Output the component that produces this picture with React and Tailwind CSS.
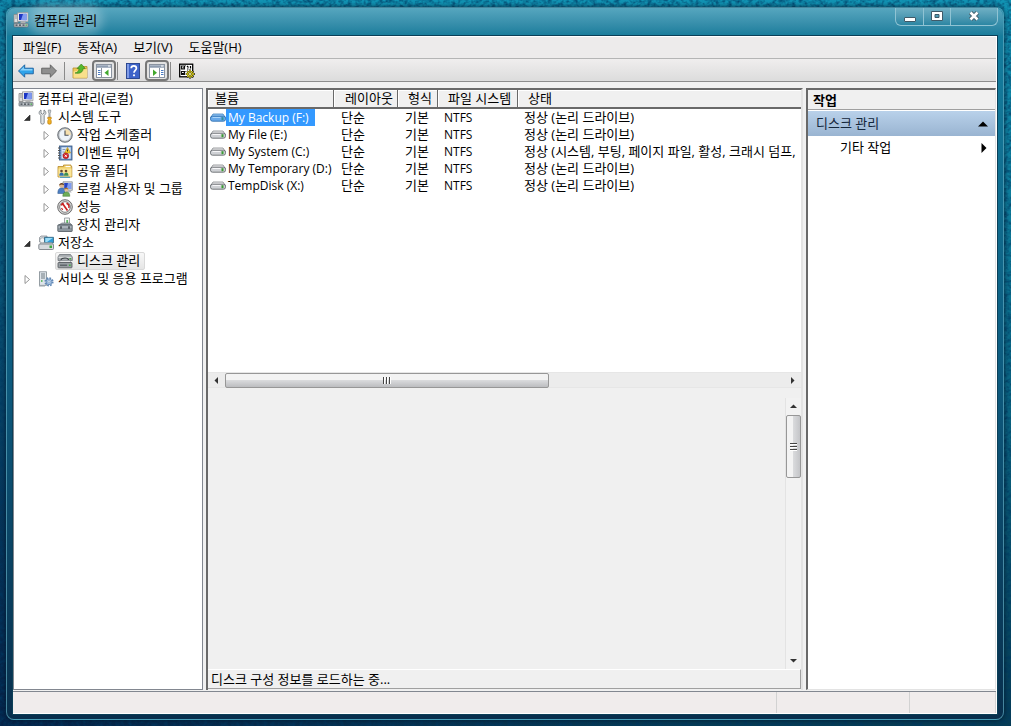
import React, { useState } from 'react';

const volumes = [
    { name: 'My Backup (F:)', status: '정상 (논리 드라이브)' },
    { name: 'My File (E:)', status: '정상 (논리 드라이브)' },
    { name: 'My System (C:)', status: '정상 (시스템, 부팅, 페이지 파일, 활성, 크래시 덤프,' },
    { name: 'My Temporary (D:)', status: '정상 (논리 드라이브)' },
    { name: 'TempDisk (X:)', status: '정상 (논리 드라이브)' },
];

const menus = ['파일(F)', '동작(A)', '보기(V)', '도움말(H)'];

// ---------- icons ----------

const Svg = ({ children, className = 'h-4 w-4' }) => (
    <svg viewBox="0 0 16 16" className={`${className} shrink-0`} aria-hidden="true">
        {children}
    </svg>
);

const ComputerIcon = () => (
    <Svg>
        <path d="M1 2.500h4v8H1z" fill="#dcdcdc" stroke="#8a8a8a" strokeWidth=".8" />
        <path d="M2 4h2M2 6h2" stroke="#888" strokeWidth=".8" />
        <path d="M4.500 .8l10.500-.3v9.200l-10.500-.4z" fill="#e8e8e8" stroke="#8f8f94" strokeWidth=".7" />
        <path d="M6 2l7.500-.2v6.400L6 8z" fill="#1b35c4" />
        <path d="M10 1.900l3.500-.1v6.400L8 8z" fill="#7d97f0" />
        <path d="M8 9.500h4l1 2H7z" fill="#bcbcbc" />
        <rect x="1" y="11.300" width="14" height="3.700" rx=".6" fill="#b9bec4" stroke="#5d646b" strokeWidth=".7" />
        <path d="M2.500 13.200h2M6 13.200h2M9.500 13.200h2" stroke="#3d444b" strokeWidth="1.200" />
        <path d="M12.500 13.200h1.500" stroke="#3fae3f" strokeWidth="1.200" />
    </Svg>
);

const ToolsIcon = () => (
    <Svg>
        <path d="M3 1v3.200l1.500 1L6 4.200V1c1.500.7 2 2 1.800 3.500L6.200 6.500v7.300c0 1.800-3.400 1.800-3.400 0V6.500L1.200 4.500C1 3 1.500 1.700 3 1z" fill="#e3e6e8" stroke="#6c7378" strokeWidth=".8" />
        <path d="M10.300 1h2.400v2l-.6 1v4.500h-1.200V4l-.6-1z" fill="#c9cdd0" stroke="#777e83" strokeWidth=".6" />
        <path d="M9.800 8.300h3.400v1.500l-.7.900.7 1v2.500c0 1.300-3.400 1.300-3.400 0v-2.500l.7-1-.7-.9z" fill="#f4b323" stroke="#b87808" strokeWidth=".7" />
    </Svg>
);

const ClockIcon = () => (
    <Svg>
        <circle cx="8" cy="8" r="7.300" fill="#a9aeb3" stroke="#555c63" strokeWidth=".8" />
        <circle cx="8" cy="8" r="5.900" fill="#edf3f9" stroke="#c7ccd1" strokeWidth=".6" />
        <path d="M8 2.100A5.900 5.900 0 0 1 13.900 8H8z" fill="#f5dfae" />
        <path d="M8 3.500V8.300h3.600" fill="none" stroke="#4a4f55" strokeWidth="1.100" />
    </Svg>
);

const EventIcon = () => (
    <Svg>
        <rect x="2.500" y="1" width="12.500" height="14" fill="#6d93c9" stroke="#34557f" strokeWidth=".8" />
        <rect x="4.500" y="2.300" width="9.200" height="11.400" fill="#d9e7f7" />
        <path d="M5.500 4.500h3M5.500 7h2M5.500 9.500h2" stroke="#7088a8" strokeWidth=".8" />
        <path d="M1 3h2.500M1 5.500h2.500M1 8h2.500M1 10.500h2.500M1 13h2.500" stroke="#555" strokeWidth="1" />
        <path d="M10.500 2.500l3 5.500h-6z" fill="#ffd22e" stroke="#ab7c00" strokeWidth=".6" />
        <path d="M10.500 4.500v2" stroke="#222" strokeWidth=".9" />
        <circle cx="8.800" cy="10.800" r="2.900" fill="#d4252b" stroke="#8e1014" strokeWidth=".5" />
        <path d="M7.700 9.700l2.200 2.200M9.900 9.700l-2.200 2.200" stroke="#fff" strokeWidth=".9" />
    </Svg>
);

const SharedFolderIcon = () => (
    <Svg>
        <path d="M1 3.500h5.500V2h7.500v1.500h.8V14H1z" fill="#f0cf68" stroke="#b6892a" strokeWidth=".8" />
        <path d="M1.500 5.500h13v8h-13z" fill="#fbe596" />
        <path d="M8.500 3.500h5" stroke="#fff" strokeWidth="1.200" />
        <circle cx="4.500" cy="8" r="1.300" fill="#6b4a2c" />
        <circle cx="9" cy="8" r="1.300" fill="#6b4a2c" />
        <path d="M2.300 12.800c0-2.400.9-3.200 2.300-3.200s2.200.9 2.200 3.200z" fill="#2f6fae" />
        <path d="M7 12.800c0-2.400.9-3.200 2.200-3.200s2.300.9 2.300 3.200z" fill="#3d8f52" />
        <path d="M3 14.300h10" stroke="#4a9bc0" strokeWidth="1.200" />
    </Svg>
);

const UsersIcon = () => (
    <Svg>
        <path d="M6 .8h9.300v8.500H6z" fill="#d6d9de" stroke="#7a8088" strokeWidth=".7" />
        <path d="M7.200 2h7v6h-7z" fill="#2442c4" />
        <path d="M11 2h3.200v6H9.500z" fill="#7f9cf0" />
        <path d="M9.500 9.500h4l1.200 2h-6z" fill="#b4b8bd" />
        <circle cx="4.600" cy="4.500" r="2.300" fill="#e2b88c" />
        <path d="M2.200 4.500C2 1.500 7 1 7 4.200 5.500 3 3.500 3.200 2.200 4.500z" fill="#5c3a1e" />
        <path d="M.8 12.500C.8 8.500 2.200 7 4.600 7S8 8.500 8 12.500z" fill="#4d7fc2" stroke="#2c5286" strokeWidth=".5" />
        <circle cx="9.300" cy="8.800" r="2" fill="#e7c09a" />
        <path d="M7.200 8.800c0-2.600 4.200-2.600 4.200-.2-1.300-.8-2.900-.8-4.200.2z" fill="#a6752e" />
        <path d="M5.800 15.300c0-3.300 1.300-4.300 3.500-4.300s3.500 1 3.500 4.300z" fill="#6fae58" stroke="#3d7330" strokeWidth=".5" />
    </Svg>
);

const PerformanceIcon = () => (
    <Svg>
        <circle cx="8" cy="8" r="7.300" fill="#d9d9d9" stroke="#6b6b6b" strokeWidth="1" />
        <circle cx="8" cy="8" r="5.300" fill="#fff" stroke="#555" strokeWidth=".7" />
        <path d="M4.300 6.500A4 4 0 0 1 6.500 4.200M9.500 4.200A4 4 0 0 1 11.800 9" fill="none" stroke="#c92020" strokeWidth="1.500" />
        <path d="M5.300 4.300l5.200 7.200" stroke="#c92020" strokeWidth="1.700" />
        <path d="M4.500 9l1.200 2" stroke="#c92020" strokeWidth="1.200" />
    </Svg>
);

const DeviceIcon = () => (
    <Svg>
        <path d="M7.500 1h5v7h-5z" fill="#f4f6f4" stroke="#8b9095" strokeWidth=".8" />
        <path d="M9.300 3h1.800v3H9.300z" fill="#5cb860" />
        <path d="M2 7.800L5 6h8l1.700 1.800z" fill="#a7afb6" stroke="#636b72" strokeWidth=".6" />
        <rect x=".8" y="7.800" width="14.400" height="6.700" rx=".6" fill="#8c969e" stroke="#4e575e" strokeWidth=".8" />
        <path d="M1.500 10h13" stroke="#c9d0d5" strokeWidth="1" />
        <path d="M4 9.300v2.500M12 9.300v2.500" stroke="#343b40" strokeWidth="1.300" />
    </Svg>
);

const StorageIcon = () => (
    <Svg>
        <path d="M1.500 2.500L3 1h6v6H1.500z" fill="#d4d8dc" stroke="#7c8389" strokeWidth=".7" />
        <circle cx="4.500" cy="5.500" r="2.700" fill="#f2f4f5" stroke="#878e94" strokeWidth=".6" />
        <path d="M6.500 2.300h9v5.500h-9z" fill="#2e9ad6" stroke="#25566f" strokeWidth=".7" />
        <path d="M7.300 3h7.500L9 7H7.300z" fill="#9bdcf7" />
        <path d="M2 9l1.500-1.300h10L15.300 9z" fill="#edeff0" stroke="#8a9096" strokeWidth=".5" />
        <rect x=".8" y="9" width="14.700" height="5.500" rx="1" fill="#d7dade" stroke="#6d747a" strokeWidth=".8" />
        <rect x="11.500" y="10.500" width="2.500" height="2.500" fill="#3daa3d" />
    </Svg>
);

const DiskMgmtIcon = () => (
    <Svg>
        <path d="M1 4l1.500-2.500h11L15.300 4v3.500H1z" fill="#a6abaf" stroke="#63696e" strokeWidth=".7" />
        <path d="M1.500 4.300h13" stroke="#e8eaeb" strokeWidth=".9" />
        <path d="M4 7.500c0-2 2-2.500 4-2.500s3.500.5 3.500 2" fill="none" stroke="#3e4449" strokeWidth="1.200" />
        <path d="M2 9.500L3.500 7.500h9l2 2z" fill="#e2e4e6" stroke="#777d82" strokeWidth=".5" />
        <rect x="1" y="9.500" width="14" height="5.300" rx=".7" fill="#989ea3" stroke="#50565b" strokeWidth=".8" />
        <path d="M3 12.200h7" stroke="#52585d" strokeWidth="1.200" />
        <path d="M12.500 5.800h1.500M12 12.200h1.600" stroke="#3fb23f" strokeWidth="1.400" />
    </Svg>
);

const ServicesIcon = () => (
    <Svg>
        <rect x="1.500" y=".8" width="7" height="13.500" fill="#dfe5ea" stroke="#7f8990" strokeWidth=".8" />
        <path d="M3 3h4M3 5h4M3 7h4" stroke="#6f7a82" strokeWidth="1" />
        <path d="M3 10h1.500" stroke="#3fae3f" strokeWidth="1.300" />
        <circle cx="11" cy="10.800" r="3.800" fill="none" stroke="#6189b8" strokeWidth="1.600" strokeDasharray="1.700 1.280" />
        <circle cx="11" cy="10.800" r="2.900" fill="#a9c6e6" stroke="#5a82b0" strokeWidth=".8" />
        <circle cx="11" cy="10.800" r="1.100" fill="#fff" stroke="#5a82b0" strokeWidth=".5" />
        <path d="M1 15h6" stroke="#9aa3aa" strokeWidth="1" />
    </Svg>
);

const ArrowIcon = ({ forward }) => (
    <Svg>
        {forward ? (
            <path d="M15.500 8L9.300 1.800v3.400H.7v5.600h8.600v3.400z" fill="#8f8f8f" stroke="#5d5d5d" strokeWidth=".9" />
        ) : (
            <>
                <path d="M.5 8l6.200-6.200v3.400h8.600v5.600H6.700v3.400z" fill="#2fa3ea" stroke="#1b5f9e" strokeWidth=".9" />
                <path d="M2 7.600l3.900-3.900v2.400h8.500v1.500z" fill="#8bd2fa" />
            </>
        )}
    </Svg>
);

const UpFolderIcon = () => (
    <Svg>
        <path d="M1 5h5l1.500-1.500H15V15H1z" fill="#eec75a" stroke="#b78d2c" strokeWidth=".8" />
        <path d="M1.500 8.500L15 6v8.700H1.500z" fill="#f9e08b" />
        <path d="M3 10c2.500-.5 4-2 4-4.500H5L9.300 1l4 4.500h-2.200c0 3.500-3 5.700-8.100 4.500z" fill="#57b82e" stroke="#2f7d15" strokeWidth=".6" />
    </Svg>
);

const PaneIcon = ({ right }) => (
    <Svg>
        <rect x=".5" y="1.500" width="15" height="13" fill="#fff" stroke="#8a93a0" strokeWidth="1" />
        <path d="M1 3.500h14" stroke="#8e9cb0" strokeWidth="2.500" />
        <path d="M12 3h2.500" stroke="#fff" strokeWidth="1" />
        <path d={right ? 'M10.500 5v9' : 'M5.500 5v9'} stroke="#8a93a0" strokeWidth="1" />
        <path d={right ? 'M12 7.500h2.500M12 9.500h2.500M12 11.500h2.500' : 'M2 7.500h2.500M2 9.500h2.500M2 11.500h2.500'} stroke="#4b7bc2" strokeWidth="1" />
        <path d={right ? 'M4 6.500l4 3.200-4 3.200z' : 'M12.500 6.500l-4 3.200 4 3.200z'} fill="#42a82e" />
    </Svg>
);

const HelpIcon = () => (
    <Svg>
        <rect x="1.500" y=".5" width="13" height="15" fill="#3d63c9" stroke="#233f8c" strokeWidth=".9" />
        <path d="M2 1h2v14H2z" fill="#7f9be6" />
        <path d="M6.200 5.300c0-3.200 5.200-3.200 5.200 0 0 2-2.400 2.200-2.400 4.400" fill="none" stroke="#fff" strokeWidth="1.700" />
        <circle cx="9" cy="12.300" r="1.100" fill="#fff" />
    </Svg>
);

const PropertiesIcon = () => (
    <Svg>
        <rect x=".7" y="1.200" width="13" height="12.600" fill="#fff" stroke="#000" strokeWidth="1.300" />
        <path d="M2.500 3h3v3h-3zM2.500 8.500h3v3h-3z" fill="#fff" stroke="#111" strokeWidth="1.100" />
        <path d="M3 4.500l1 1 2.500-3M3 10l1 1 2.500-3" fill="none" stroke="#000" strokeWidth="1" />
        <path d="M8 3l1.500 1.500M11.500 3v2.500M8 6h1.500" stroke="#000" strokeWidth="1.200" />
        <path d="M11 6.500v9M6.800 11h9M8 8l6.200 6.200M14.200 8L8 14.200" stroke="#000" strokeWidth="1.900" />
        <path d="M11 7v8M7.200 11h8M8.400 8.400l5.300 5.300M13.700 8.400l-5.300 5.300" stroke="#f7ea1c" strokeWidth="1.300" />
        <circle cx="11" cy="11" r="1.500" fill="#fff8a0" stroke="#000" strokeWidth=".5" />
    </Svg>
);

const DriveIcon = ({ selected }) => (
    <svg viewBox="0 0 16 9" className="h-[9px] w-4 shrink-0" aria-hidden="true">
        <path d="M.6 4.500L3 1h10l2.400 3.500z" fill={selected ? '#8ec4f5' : '#ececee'} stroke={selected ? '#4583bd' : '#85888c'} strokeWidth=".8" />
        <rect x=".5" y="3.200" width="15" height="5" rx="2" fill={selected ? '#69aaea' : '#cfd1d5'} stroke={selected ? '#2f70b0' : '#686b70'} strokeWidth=".9" />
        <path d="M2.500 4.500h8" stroke={selected ? '#a9d4fa' : '#f6f6f8'} strokeWidth="1" />
        <rect x="11.500" y="4.200" width="2" height="3" fill={selected ? '#2f8f9a' : '#3a9c34'} />
    </svg>
);

const Expander = ({ open }) => (
    <svg viewBox="0 0 9 9" className="h-[9px] w-[9px]" aria-hidden="true">
        {open ? (
            <path d="M7 2v5.500H1.500z" fill="#333" stroke="#222" strokeWidth=".6" />
        ) : (
            <path d="M2 .5l4.500 4L2 8.500z" fill="#fff" stroke="#8a8a8a" strokeWidth=".9" />
        )}
    </svg>
);

// ---------- parts ----------

const tree = [
    { label: '컴퓨터 관리(로컬)', icon: <ComputerIcon />, pad: 'pl-1' },
    { label: '시스템 도구', icon: <ToolsIcon />, pad: 'pl-2', open: true },
    { label: '작업 스케줄러', icon: <ClockIcon />, pad: 'pl-[27px]', open: false },
    { label: '이벤트 뷰어', icon: <EventIcon />, pad: 'pl-[27px]', open: false },
    { label: '공유 폴더', icon: <SharedFolderIcon />, pad: 'pl-[27px]', open: false },
    { label: '로컬 사용자 및 그룹', icon: <UsersIcon />, pad: 'pl-[27px]', open: false },
    { label: '성능', icon: <PerformanceIcon />, pad: 'pl-[27px]', open: false },
    { label: '장치 관리자', icon: <DeviceIcon />, pad: 'pl-[43px]' },
    { label: '저장소', icon: <StorageIcon />, pad: 'pl-2', open: true },
    { label: '디스크 관리', icon: <DiskMgmtIcon />, pad: 'pl-[41px]' },
    { label: '서비스 및 응용 프로그램', icon: <ServicesIcon />, pad: 'pl-2', open: false },
];

const TreePane = () => {
    const [current, setCurrent] = useState('디스크 관리');

    return (
        <nav className="w-[190px] shrink-0 overflow-hidden border border-[#828790] bg-white">
            <ul className="pt-px">
                {tree.map((node) => (
                    <li key={node.label} className={`flex h-[18px] items-center ${node.pad}`}>
                        {node.open !== undefined && (
                            <button aria-label={`${node.label} 확장`} className="flex w-4 shrink-0 items-center pl-px">
                                <Expander open={node.open} />
                            </button>
                        )}
                        <button
                            onClick={() => setCurrent(node.label)}
                            className={
                                current === node.label
                                    ? 'flex h-[18px] items-center gap-1 rounded-xs border border-[#d9d9d9] bg-linear-to-b from-[#f8f8f8] to-[#e5e5e5] px-px pr-1 whitespace-nowrap'
                                    : 'flex h-[18px] items-center gap-1 whitespace-nowrap'
                            }
                        >
                            {node.icon}
                            {node.label}
                        </button>
                    </li>
                ))}
            </ul>
        </nav>
    );
};

const Grip = ({ vertical }) => (
    <span className={vertical ? 'flex flex-col gap-px' : 'flex gap-px'}>
        {[0, 1, 2].map((i) => (
            <span
                key={i}
                className={
                    vertical
                        ? 'h-[2px] w-[7px] border-t border-[#444] bg-white'
                        : 'h-[7px] w-[2px] border-l border-[#444] bg-white'
                }
            />
        ))}
    </span>
);

const arrowPaths = {
    left: 'M6 1v7L2.500 4.500z',
    right: 'M3 1v7l3.500-3.500z',
    up: 'M1 6h7L4.500 2.500z',
    down: 'M1 3h7L4.500 6.500z',
};

const ScrollArrow = ({ dir, label }) => (
    <button aria-label={label} className="flex h-[17px] w-[17px] shrink-0 items-center justify-center">
        <svg viewBox="0 0 9 9" className="h-[9px] w-[9px]" aria-hidden="true">
            <path d={arrowPaths[dir]} fill="#333" />
        </svg>
    </button>
);

const headCell = 'border-r border-b-2 border-r-[#696969] border-b-[#696969] shadow-[inset_1px_1px_0_#fff] bg-[#f0f0f0] p-0 text-left font-normal whitespace-nowrap';

const VolumeTable = () => {
    const [selected, setSelected] = useState('My Backup (F:)');

    return (
        <div className="h-[282px] shrink-0 overflow-hidden bg-white">
            <table className="w-full table-fixed border-separate border-spacing-0">
                <colgroup>
                    <col className="w-[126px]" />
                    <col className="w-16" />
                    <col className="w-10" />
                    <col className="w-20" />
                    <col />
                </colgroup>
                <thead>
                    <tr className="h-[19px] leading-[17px]">
                        <th className={`${headCell} pl-[7px]`}>볼륨</th>
                        <th className={`${headCell} pl-[11px]`}>레이아웃</th>
                        <th className={`${headCell} pl-[10px]`}>형식</th>
                        <th className={`${headCell} pl-[10px]`}>파일 시스템</th>
                        <th className={`${headCell} border-r-0 pl-[10px]`}>상태</th>
                    </tr>
                </thead>
                <tbody>
                    {volumes.map((v) => (
                        <tr key={v.name} onClick={() => setSelected(v.name)} className="h-[17px] leading-[17px] whitespace-nowrap">
                            <td className="p-0 text-xs leading-[17px]">
                                <span className="flex items-center pl-[2px]">
                                    <DriveIcon selected={selected === v.name} />
                                    <span className={selected === v.name ? 'bg-[#3399ff] pr-[6px] pl-[2px] text-white' : 'pl-[2px]'}>
                                        {v.name}
                                    </span>
                                </span>
                            </td>
                            <td className="p-0 pl-[7px]">단순</td>
                            <td className="p-0 pl-[7px]">기본</td>
                            <td className="p-0 pl-[6px] text-xs leading-[17px]">NTFS</td>
                            <td className="p-0 pl-[6px]">{v.status}</td>
                        </tr>
                    ))}
                </tbody>
            </table>
        </div>
    );
};

const DiskPane = () => (
    <main className="flex min-w-0 flex-1 flex-col border-t-2 border-r-2 border-l-2 border-t-[#696969] border-r-[#e3e3e3] border-l-[#696969] bg-[#f0f0f0]">
        <VolumeTable />
        <div className="flex h-4 shrink-0 items-center border-y border-[#e6e6e6] bg-[#ececec]">
            <ScrollArrow dir="left" label="왼쪽으로 스크롤" />
            <div className="flex flex-1">
                <div className="flex h-[15px] w-[58%] items-center justify-center rounded-xs border border-[#979797] bg-linear-to-b from-[#f3f3f3] from-45% via-[#d9dadc] via-50% to-[#bcbdc0]">
                    <Grip />
                </div>
            </div>
            <ScrollArrow dir="right" label="오른쪽으로 스크롤" />
        </div>
        <div className="flex min-h-0 flex-1 pt-[10px]">
            <div className="flex-1" />
            <div className="flex w-4 flex-col items-center border-l border-[#e3e3e3] bg-[#f2f2f2]">
                <ScrollArrow dir="up" label="위로 스크롤" />
                <div className="flex-1">
                    <div className="flex h-[63px] w-[15px] items-center justify-center rounded-xs border border-[#979797] bg-linear-to-r from-[#f3f3f3] from-45% via-[#d9dadc] via-50% to-[#c4c5c8]">
                        <Grip vertical />
                    </div>
                </div>
                <ScrollArrow dir="down" label="아래로 스크롤" />
            </div>
        </div>
        <p className="mb-px h-5 shrink-0 border-t border-r border-b border-t-white border-r-[#a0a0a0] border-b-[#a0a0a0] pl-[3px] leading-[18px]">
            디스크 구성 정보를 로드하는 중...
        </p>
    </main>
);

const ActionsPane = () => (
    <aside className="w-[190px] shrink-0 border-t-2 border-r border-b border-l-2 border-t-[#696969] border-r-[#e3e3e3] border-b-[#e3e3e3] border-l-[#696969] bg-white">
        <h2 className="h-5 border-b border-[#a0a0a0] bg-[#f0f0f0] pl-[5px] leading-5 font-bold">작업</h2>
        <button className="mt-px flex h-[25px] w-full items-center justify-between bg-linear-to-b from-[#b9d1ea] to-[#99b4d1] pr-[7px] pl-2 text-[#14263a]">
            디스크 관리
            <svg viewBox="0 0 10 6" className="h-[6px] w-[10px]" aria-hidden="true">
                <path d="M0 5.500L5 .5l5 5z" fill="#000" />
            </svg>
        </button>
        <button className="flex h-6 w-full items-center justify-between pr-2 pl-8">
            기타 작업
            <svg viewBox="0 0 6 10" className="h-[10px] w-[6px]" aria-hidden="true">
                <path d="M.5 0l5 5-5 5z" fill="#000" />
            </svg>
        </button>
    </aside>
);

const TitleBar = () => (
    <header className="flex h-7 shrink-0 items-start justify-between">
        <div className="flex items-center gap-[5px] pt-[2px] pl-[6px]">
            <ComputerIcon />
            <h1 className="rounded-full bg-white/25 leading-5 shadow-[0_0_10px_6px_rgba(255,255,255,0.25)]">컴퓨터 관리</h1>
        </div>
        <div className="mr-[5px] flex h-[18px] rounded-b-md border border-t-0 border-[#8fc3d3] bg-linear-to-b from-[#6fb0c4] to-[#2b86a3]">
            <button aria-label="최소화" className="flex w-7 items-center justify-center border-r border-[#8fc3d3]">
                <svg viewBox="0 0 12 12" className="h-3 w-3" aria-hidden="true">
                    <rect x=".5" y="6.500" width="11" height="4" rx=".5" fill="#fff" stroke="#3f5a68" strokeWidth="1" />
                </svg>
            </button>
            <button aria-label="최대화" className="flex w-[27px] items-center justify-center border-r border-[#8fc3d3] pb-[2px]">
                <svg viewBox="0 0 12 12" className="h-3 w-3" aria-hidden="true">
                    <path d="M.5 1.500h11v9H.5zM4 4.500v3h4v-3z" fill="#fff" fillRule="evenodd" stroke="#3f5a68" strokeWidth="1" />
                </svg>
            </button>
            <button aria-label="닫기" className="flex w-[46px] items-center justify-center pb-[2px]">
                <svg viewBox="0 0 12 12" className="h-3 w-3" aria-hidden="true">
                    <path d="M2.500 2.500l7 7M9.500 2.500l-7 7" stroke="#3f5a68" strokeWidth="4.500" />
                    <path d="M2.500 2.500l7 7M9.500 2.500l-7 7" stroke="#fff" strokeWidth="2.600" />
                </svg>
            </button>
        </div>
    </header>
);

const pressed = 'flex h-[21px] w-6 items-center justify-center rounded-sm border-2 border-[#777] bg-[#e2e2e2]';
const separator = 'h-[18px] w-px bg-[#8a8a8a]';

const Toolbar = () => (
    <div className="flex h-[23px] shrink-0 items-center border-b border-[#8c8c8c] bg-linear-to-b from-[#f0eeee] to-[#dcdcdc] pt-px pl-[5px]">
        <div className="flex items-center gap-[7px]">
            <button aria-label="뒤로"><ArrowIcon /></button>
            <button aria-label="앞으로"><ArrowIcon forward /></button>
            <span className={separator} />
        </div>
        <div className="flex items-center gap-1 pl-[7px]">
            <button aria-label="한 수준 위로"><UpFolderIcon /></button>
            <button aria-label="콘솔 트리 표시/숨기기" className={pressed}><PaneIcon /></button>
        </div>
        <div className="flex items-center gap-[7px] pl-px">
            <span className={separator} />
            <button aria-label="도움말"><HelpIcon /></button>
        </div>
        <div className="flex items-center gap-px pl-1">
            <button aria-label="작업 창 표시/숨기기" className={pressed}><PaneIcon right /></button>
            <span className={separator} />
        </div>
        <button aria-label="속성" className="pl-2"><PropertiesIcon /></button>
    </div>
);

const Desktop = () => (
    <svg className="absolute inset-0 h-full w-full" aria-hidden="true">
        <defs>
            <linearGradient id="night" x1="0" y1="1" x2="1" y2=".4">
                <stop offset="0" stopColor="#041a44" stopOpacity=".75" />
                <stop offset=".5" stopColor="#041a44" stopOpacity="0" />
            </linearGradient>
            <filter id="weave">
                <feTurbulence type="fractalNoise" baseFrequency=".25 .3" numOctaves="2" seed="4" />
                <feColorMatrix values="0 0 0 0 0  0 0 0 0 .04  0 0 0 0 .12  1.600 0 0 0 -.6" />
            </filter>
        </defs>
        <rect width="100%" height="100%" fill="url(#night)" />
        <rect width="100%" height="100%" filter="url(#weave)" />
    </svg>
);

const App = () => (
    <div className="relative h-screen overflow-hidden bg-linear-to-b from-[#1193b3] via-[#0a6a88] to-[#063c55] pt-[7px] pr-[7px] pb-[6px] pl-[6px] font-['Open_Sans','Noto_Sans_CJK_KR',sans-serif] text-[13px] text-black">
        <Desktop />
        <div className="relative flex h-full flex-col rounded-lg border border-[#5fa9bf]/70 bg-linear-to-b from-[#1580a0] via-[#0d5c80] to-[#082f4d] px-[6px] pb-[5px] shadow-[0_0_4px_1px_rgba(0,20,40,0.6)]">
            <div className="-mx-[6px] shrink-0 rounded-t-lg bg-linear-to-b from-[#56a6bf] to-[#177c9b]">
                <TitleBar />
            </div>
            <div className="flex min-h-0 flex-1 flex-col border-y border-r border-white bg-[#f0f0f0] outline outline-[#0b3f57]">
                <div className="flex h-[22px] shrink-0 items-center gap-4 border-b border-[#b5b5b5] bg-[#edebeb] pl-[10px]">
                    {menus.map((m) => (
                        <button key={m}>{m}</button>
                    ))}
                </div>
                <Toolbar />
                <div className="flex min-h-0 flex-1 gap-[3px] pt-[6px]">
                    <TreePane />
                    <DiskPane />
                    <ActionsPane />
                </div>
                <footer className="mt-px flex h-[22px] shrink-0 justify-end border-t border-[#828790] bg-[#f0ecec]">
                    <div className="w-[133px] border-l border-[#d2d2d2]" />
                    <div className="w-[87px] border-x border-[#d2d2d2]" />
                </footer>
            </div>
        </div>
    </div>
);

export default App;
